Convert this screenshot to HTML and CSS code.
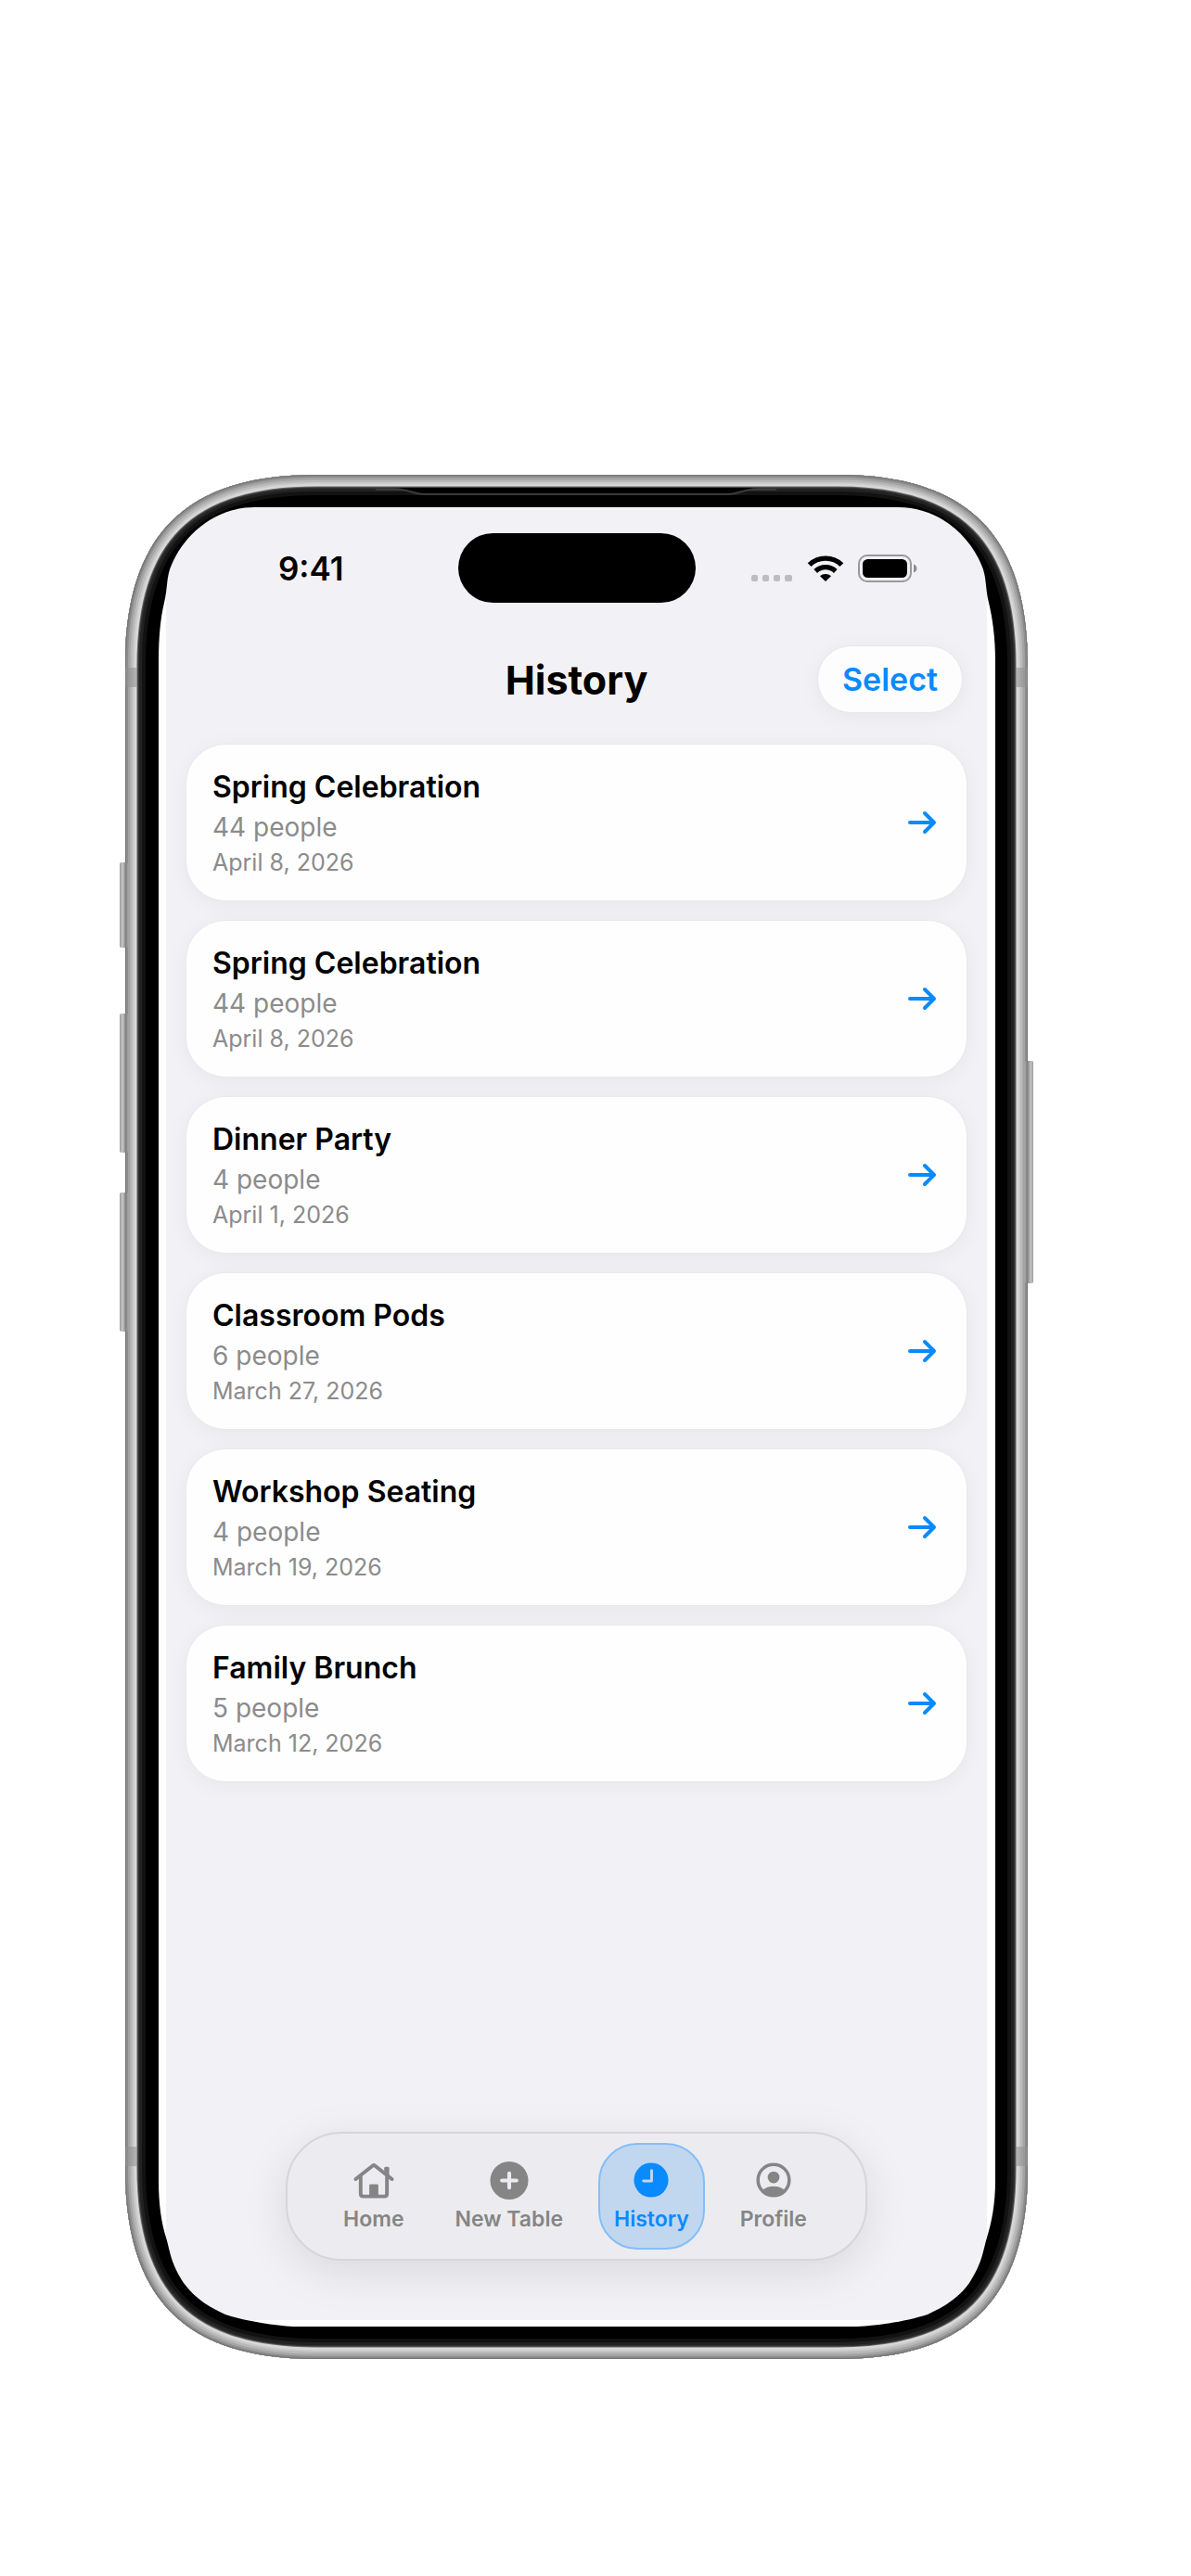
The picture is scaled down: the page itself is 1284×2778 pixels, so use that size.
FILE: index.html
```
<!DOCTYPE html>
<html lang="en">
<head>
    <meta charset="UTF-8">
    <meta name="viewport" content="width=device-width, initial-scale=1.0">
    <title>History</title>
    <link rel="stylesheet" href="styles.css">
</head>
<body>
    <div class="phone">
        <div class="screen">
            <div class="status-bar">
                <span class="time">9:41</span>
                <span class="island"></span>
                <div class="status-icons">
                    <svg width="46" height="30" viewBox="0 0 46 30" fill="#bdbdbf">
                        <rect x="1" y="22" width="7" height="7" rx="2"/>
                        <rect x="13" y="22" width="7" height="7" rx="2"/>
                        <rect x="25" y="22" width="7" height="7" rx="2"/>
                        <rect x="37" y="22" width="8" height="7" rx="2"/>
                    </svg>
                    <svg width="40" height="30" viewBox="0 0 40 30" fill="none" stroke="#000" stroke-width="5.4">
                        <path d="M2.6 11.2 C12 1.8 28 1.8 37.4 11.2"/>
                        <path d="M9.2 18 C15.5 12.2 24.5 12.2 30.8 18"/>
                        <path d="M20 29 L14 23.2 C17.4 20.2 22.6 20.2 26 23.2 Z" fill="#000" stroke="none"/>
                    </svg>
                    <svg width="64" height="30" viewBox="0 0 64 30">
                        <rect x="1" y="1" width="56" height="28" rx="9" fill="none" stroke="#99999b" stroke-width="2"/>
                        <rect x="5" y="5" width="48" height="20" rx="5.5" fill="#000"/>
                        <path d="M60 10.5 C64.5 12 64.5 18 60 19.5 Z" fill="#8d8d8f"/>
                    </svg>
                </div>
            </div>

            <header class="header">
                <h1 class="title">History</h1>
                <button class="select-button">Select</button>
            </header>

            <main class="list">
                <a href="#" class="card">
                    <div class="card-text">
                        <h2 class="card-name">Spring Celebration</h2>
                        <p class="card-people">44 people</p>
                        <p class="card-date">April 8, 2026</p>
                    </div>
                    <svg class="arrow" viewBox="0 0 40 40"><path d="M7 20H32M23 10L33 20L23 30"/></svg>
                </a>
                <a href="#" class="card">
                    <div class="card-text">
                        <h2 class="card-name">Spring Celebration</h2>
                        <p class="card-people">44 people</p>
                        <p class="card-date">April 8, 2026</p>
                    </div>
                    <svg class="arrow" viewBox="0 0 40 40"><path d="M7 20H32M23 10L33 20L23 30"/></svg>
                </a>
                <a href="#" class="card">
                    <div class="card-text">
                        <h2 class="card-name">Dinner Party</h2>
                        <p class="card-people">4 people</p>
                        <p class="card-date">April 1, 2026</p>
                    </div>
                    <svg class="arrow" viewBox="0 0 40 40"><path d="M7 20H32M23 10L33 20L23 30"/></svg>
                </a>
                <a href="#" class="card">
                    <div class="card-text">
                        <h2 class="card-name">Classroom Pods</h2>
                        <p class="card-people">6 people</p>
                        <p class="card-date">March 27, 2026</p>
                    </div>
                    <svg class="arrow" viewBox="0 0 40 40"><path d="M7 20H32M23 10L33 20L23 30"/></svg>
                </a>
                <a href="#" class="card">
                    <div class="card-text">
                        <h2 class="card-name">Workshop Seating</h2>
                        <p class="card-people">4 people</p>
                        <p class="card-date">March 19, 2026</p>
                    </div>
                    <svg class="arrow" viewBox="0 0 40 40"><path d="M7 20H32M23 10L33 20L23 30"/></svg>
                </a>
                <a href="#" class="card">
                    <div class="card-text">
                        <h2 class="card-name">Family Brunch</h2>
                        <p class="card-people">5 people</p>
                        <p class="card-date">March 12, 2026</p>
                    </div>
                    <svg class="arrow" viewBox="0 0 40 40"><path d="M7 20H32M23 10L33 20L23 30"/></svg>
                </a>
            </main>

            <nav class="tab-bar">
                <button class="tab">
                    <svg class="tab-icon" viewBox="0 0 48 44" fill="none" stroke="currentColor" stroke-width="4" stroke-linecap="round" stroke-linejoin="round">
                        <path d="M4 20.5L22.5 5.8Q24 4.6 25.5 5.8L44 20.5"/>
                        <path d="M9.5 18V36.5Q9.5 39.5 12.5 39.5H35.5Q38.5 39.5 38.5 36.5V18"/>
                        <path d="M35.5 14V8.5Q35.5 7 37 7H39.5Q41 7 41 8.5V18Z" fill="currentColor" stroke="none"/>
                        <path d="M19 40V27.5Q19 26 20.5 26H27.5Q29 26 29 27.5V40Z" fill="currentColor" stroke="none"/>
                    </svg>
                    <span>Home</span>
                </button>
                <button class="tab">
                    <svg class="tab-icon" viewBox="0 0 48 44">
                        <circle cx="24" cy="22" r="21" fill="currentColor"/>
                        <path d="M24 14V30M16 22H32" stroke="#ececf0" stroke-width="4.2" stroke-linecap="round"/>
                    </svg>
                    <span>New Table</span>
                </button>
                <button class="tab tab-active">
                    <svg class="tab-icon" viewBox="0 0 48 44">
                        <circle cx="24" cy="21.5" r="19" fill="currentColor"/>
                        <path d="M24.5 11V22.5H15.5" fill="none" stroke="#c0d7ef" stroke-width="3" stroke-linecap="round" stroke-linejoin="round"/>
                    </svg>
                    <span>History</span>
                </button>
                <button class="tab">
                    <svg class="tab-icon" viewBox="0 0 48 44">
                        <circle cx="24" cy="21.5" r="17.2" fill="none" stroke="currentColor" stroke-width="3.6"/>
                        <circle cx="24" cy="18.5" r="6.5" fill="currentColor"/>
                        <path d="M11.5 33C15 29.5 19 28.3 24 28.3S33 29.5 36.5 33C33 38 28 40 24 40S15 38 11.5 33Z" fill="currentColor"/>
                    </svg>
                    <span>Profile</span>
                </button>
            </nav>
        </div>

        <svg class="frame" viewBox="0 0 973 2032" preserveAspectRatio="none">
            <defs>
                <path id="body" d="M0 205C0 65 65 0 205 0H768C908 0 973 65 973 205V1827C973 1967 908 2032 768 2032H205C65 2032 0 1967 0 1827Z"/>
                <clipPath id="ring">
                    <path clip-rule="evenodd" d="M0 205C0 65 65 0 205 0H768C908 0 973 65 973 205V1827C973 1967 908 2032 768 2032H205C65 2032 0 1967 0 1827Z
                    M36 200C36 175 38 155 42 138C46 122 44 110 50 97C63 66 95 35 140 35H833C878 35 910 66 923 97C929 110 927 122 931 138C935 155 938 175 938 200V1840C938 1865 934 1885 929 1901C924 1918 924 1928 910 1950C897 1968 880 1977 865 1984C840 1992 805 1997 785 1997H188C168 1997 133 1992 108 1984C93 1977 76 1968 63 1950C49 1928 49 1918 44 1901C39 1885 36 1865 36 1840Z"/>
                </clipPath>
                <linearGradient id="key-left">
                    <stop offset="0" stop-color="#9a9a9a"/>
                    <stop offset="0.35" stop-color="#c9c9c9"/>
                    <stop offset="0.75" stop-color="#7d7d7d"/>
                    <stop offset="1" stop-color="#a8a8a8"/>
                </linearGradient>
                <linearGradient id="key-right">
                    <stop offset="0" stop-color="#a8a8a8"/>
                    <stop offset="0.25" stop-color="#7d7d7d"/>
                    <stop offset="0.7" stop-color="#c4c4c4"/>
                    <stop offset="1" stop-color="#9a9a9a"/>
                </linearGradient>
            </defs>
            <g clip-path="url(#ring)" fill="none">
                <use href="#body" fill="#000"/>
                <use href="#body" stroke="#121212" stroke-width="44"/>
                <use href="#body" stroke="#222" stroke-width="36"/>
                <use href="#body" stroke="#333" stroke-width="30"/>
                <use href="#body" stroke="#696969" stroke-width="27"/>
                <use href="#body" stroke="#d8d8d8" stroke-width="25"/>
                <use href="#body" stroke="#cbcbcb" stroke-width="20"/>
                <use href="#body" stroke="#b9b9b9" stroke-width="16"/>
                <use href="#body" stroke="#a4a4a4" stroke-width="11"/>
                <use href="#body" stroke="#8c8c8c" stroke-width="6"/>
                <use href="#body" stroke="#767676" stroke-width="2"/>
            </g>
            <!-- antenna bands -->
            <g fill="#8f8f8f" fill-opacity="0.55">
                <rect x="0" y="208" width="13" height="21"/>
                <rect x="960" y="208" width="13" height="21"/>
                <rect x="0" y="1803" width="13" height="21"/>
                <rect x="960" y="1803" width="13" height="21"/>
            </g>
            <!-- earpiece -->
            <path d="M290 14C305 14 310 20 322 20H650C662 20 667 14 682 14Z" fill="#000"/>
            <path d="M270 16H295C307 16 310 21 322 21H650C662 21 665 16 677 16H702" fill="none" stroke="#3a3a3a" stroke-width="2"/>
            <!-- side keys -->
            <rect x="-6" y="418" width="9" height="92" rx="2" fill="url(#key-left)"/>
            <rect x="-6" y="581" width="9" height="150" rx="2" fill="url(#key-left)"/>
            <rect x="-6" y="774" width="9" height="150" rx="2" fill="url(#key-left)"/>
            <rect x="970" y="632" width="9" height="240" rx="2" fill="url(#key-right)"/>
        </svg>
    </div>
</body>
</html>
```
FILE: styles.css
```
* {
  box-sizing: border-box;
}
body {
  margin: 0;
  padding: 512px 176px 234px 135px;
  background-color: white;
  font-family: Inter, "Liberation Sans", sans-serif;
}
h1, h2, p {
  margin: 0;
}
button {
  font-family: inherit;
  cursor: pointer;
}
.phone {
  position: relative;
  display: flex;
  aspect-ratio: 973 / 2032;
  padding: 35px 44px 42px;
}
.frame {
  position: absolute;
  top: 0;
  left: 0;
  width: 100%;
  height: 100%;
  overflow: visible;
  pointer-events: none;
}
.screen {
  flex: 1;
  display: flex;
  flex-direction: column;
  background-color: #f2f1f6;
  border-radius: 80px;
  overflow: hidden;
}

.status-bar {
  display: grid;
  grid-template-columns: 1fr 256px 1fr;
  align-items: center;
  margin-top: 28px;
}
.time {
  padding-right: 2px;
  text-align: center;
  font-size: 35px;
  font-weight: 600;
}
.island {
  height: 75px;
  border-radius: 38px;
  background-color: black;
}
.status-icons {
  display: flex;
  justify-content: center;
  gap: 15px;
  padding-right: 16px;
}

.header {
  display: grid;
  grid-template-columns: 1fr auto 1fr;
  align-items: center;
  margin-top: 46px;
  padding: 0 26px;
}
.title {
  grid-column: 2;
  font-size: 43px;
  font-weight: 700;
}
.select-button {
  justify-self: end;
  height: 73px;
  padding: 0 26px;
  border: 1px solid #e6e6ea;
  border-radius: 37px;
  background-color: #fdfdfe;
  box-shadow: 0 4px 24px rgba(0, 0, 0, 0.05);
  color: #0a8aff;
  font-size: 34px;
  font-weight: 600;
}

.list {
  flex: 1;
  display: flex;
  flex-direction: column;
  gap: 22px;
  padding: 34px 22px 0;
}
.card {
  display: flex;
  align-items: center;
  justify-content: space-between;
  padding: 23px 28px;
  border-radius: 42px;
  background-color: #fefefe;
  box-shadow: 0 0 0 1px #e9e9ed, 0 4px 24px rgba(0, 0, 0, 0.05);
  color: black;
  text-decoration: none;
}
.card-name {
  font-size: 32px;
  line-height: 46px;
  font-weight: 600;
}
.card-people {
  color: #8b8b8b;
  font-size: 28px;
  line-height: 40px;
}
.card-date {
  color: #8b8b8b;
  font-size: 25px;
  line-height: 36px;
}
.arrow {
  width: 40px;
  height: 40px;
  fill: none;
  stroke: #0a8aff;
  stroke-width: 4;
  stroke-linecap: round;
  stroke-linejoin: round;
}

.tab-bar {
  align-self: center;
  display: flex;
  gap: 21px;
  margin-bottom: 64px;
  padding: 10px 46px 10px 43px;
  border: 2px solid #d6d6d7;
  border-radius: 60px;
  background-color: #ececf0;
  box-shadow: 0 12px 50px rgba(0, 0, 0, 0.1);
}
.tab {
  display: flex;
  flex-direction: column;
  align-items: center;
  gap: 6px;
  height: 115px;
  padding: 17px 15px;
  border: 2px solid transparent;
  border-radius: 42px;
  background-color: transparent;
  color: #858585;
  font-size: 23px;
  line-height: 28px;
  font-weight: 600;
}
.tab-active {
  border-color: #84bef7;
  background-color: #c0d7ef;
  color: #0a8aff;
}
.tab-icon {
  width: 48px;
  height: 44px;
}
```
